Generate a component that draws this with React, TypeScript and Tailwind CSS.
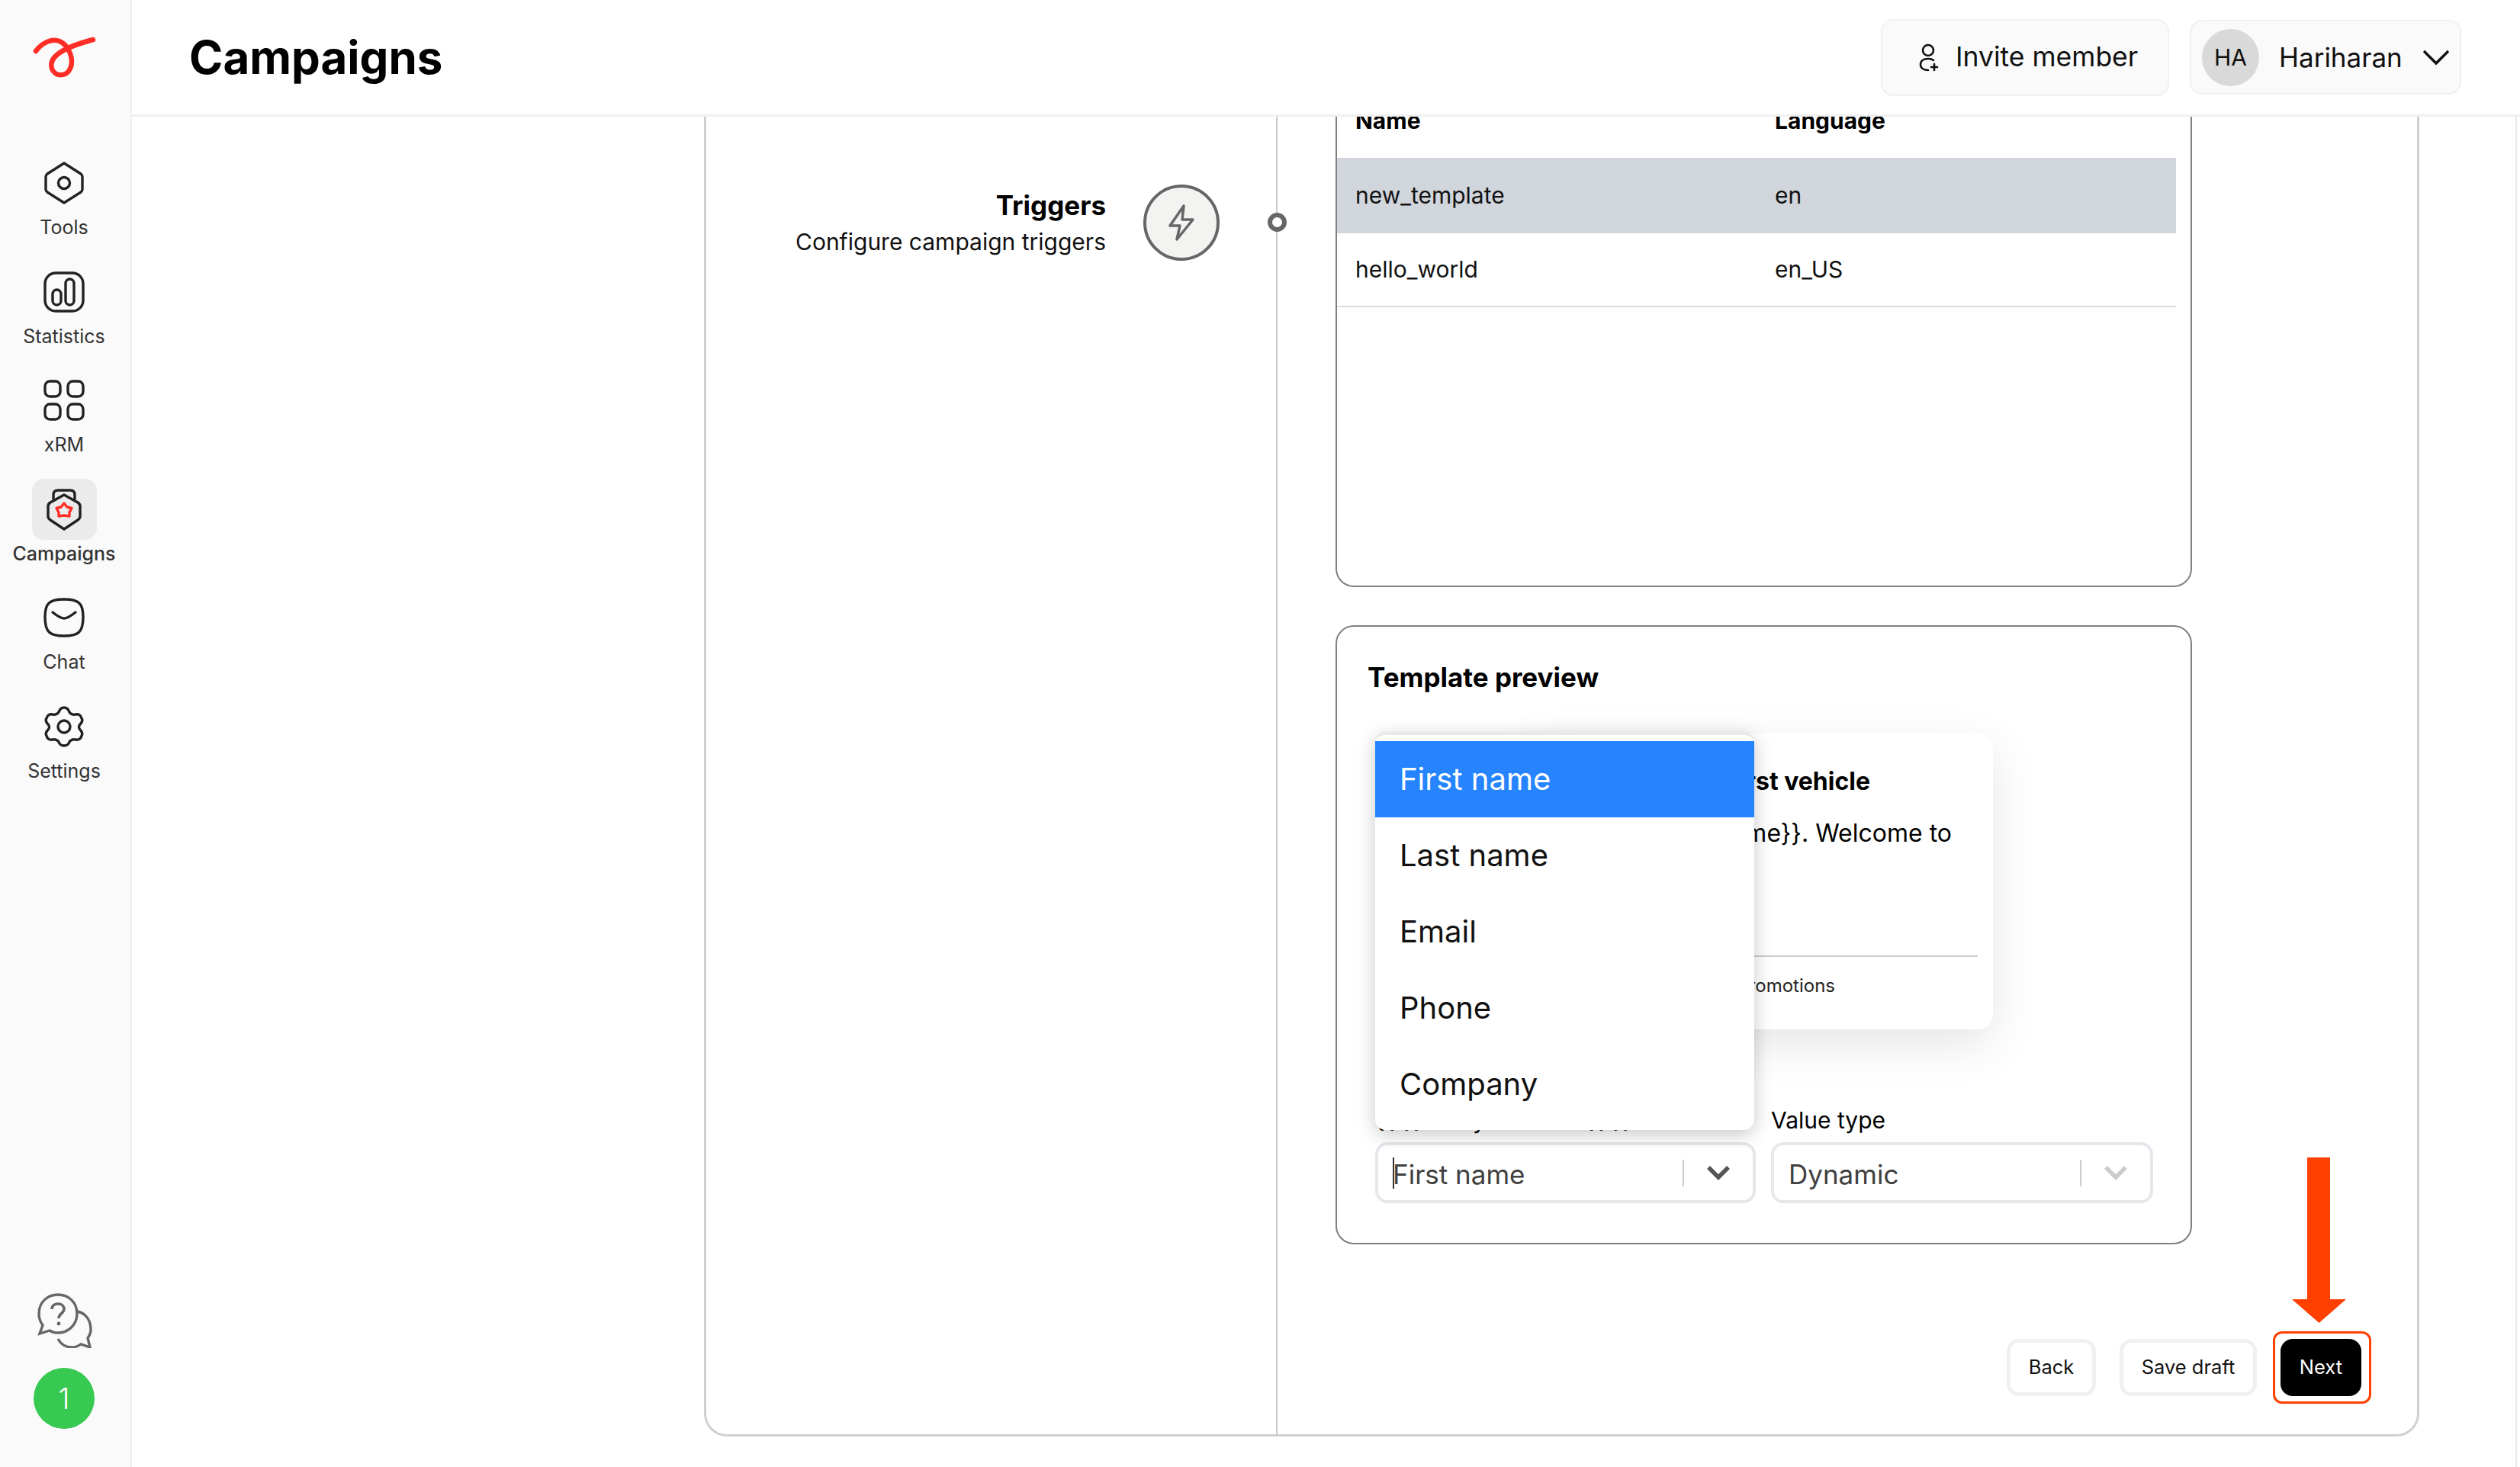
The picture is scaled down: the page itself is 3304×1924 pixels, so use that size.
import React from "react";

const Stroke = "#222222";

function Logo() {
  return (
    <svg width="172" height="152" viewBox="0 0 172 152" fill="none">
      <path d="M47 67 C55 56 68 50 78 54 C92 60 97 80 92 90 C87 101 72 101 68 90 C63 74 84 62 122 52" stroke="#ff2d26" strokeWidth="6.5" strokeLinecap="round" />
    </svg>
  );
}

function ToolsIcon() {
  return (
    <svg width="56" height="60" viewBox="0 0 56 60" fill="none" stroke={Stroke} strokeWidth="3.4" strokeLinejoin="round">
      <path d="M28 4 L50 18 Q52 19.500 52 22 L52 38 Q52 40.500 50 42 L28 56 L6 42 Q4 40.500 4 38 L4 22 Q4 19.500 6 18 Z" />
      <circle cx="28" cy="30" r="7.500" />
    </svg>
  );
}
function StatsIcon() {
  return (
    <svg width="56" height="56" viewBox="0 0 56 56" fill="none" stroke={Stroke} strokeWidth="3.4">
      <rect x="3" y="3" width="50" height="50" rx="14" />
      <rect x="13" y="25" width="11" height="20" rx="5.500" />
      <rect x="30" y="11" width="11" height="34" rx="5.500" />
    </svg>
  );
}
function GridIcon() {
  return (
    <svg width="56" height="56" viewBox="0 0 56 56" fill="none" stroke={Stroke} strokeWidth="3.4">
      <rect x="3" y="3" width="20" height="20" rx="6.500" />
      <rect x="33" y="3" width="20" height="20" rx="6.500" />
      <rect x="3" y="33" width="20" height="20" rx="6.500" />
      <rect x="33" y="33" width="20" height="20" rx="6.500" />
    </svg>
  );
}
function CampaignIcon() {
  return (
    <svg width="46" height="56" viewBox="0 0 46 56" fill="none" strokeLinejoin="round">
      <path d="M9 15 L9 9 Q9 3 15 3 L31 3 Q37 3 37 9 L37 15" stroke={Stroke} strokeWidth="3.4" />
      <path d="M23 9 L41 19 Q44 21 44 24 L44 37 Q44 40 41 42 L23 54 L5 42 Q2 40 2 37 L2 24 Q2 21 5 19 Z" stroke={Stroke} strokeWidth="3.4" />
      <path d="M23 20 L27 25 L33 26.500 L30 32 L30 37 L23 36 L16 37 L16 32 L13 26.500 L19 25 Z" stroke="#ff2d26" strokeWidth="3.400" />
    </svg>
  );
}
function ChatIcon() {
  return (
    <svg width="54" height="54" viewBox="0 0 54 54" fill="none" stroke={Stroke} strokeWidth="3.4" strokeLinecap="round">
      <path d="M27 3 C46 3 52 8 52 26 C52 46 46 51 27 51 C8 51 2 46 2 26 C2 8 8 3 27 3 Z" />
      <path d="M12 20 C17 24 22 28 27 28 C32 28 37 24 42 20" />
    </svg>
  );
}
function SettingsIcon() {
  return (
    <svg width="52" height="54" viewBox="0 0 52 54" fill="none" stroke={Stroke} strokeWidth="3.4" strokeLinejoin="round">
      <path d="M26 2 C30 2 32 5 33 8 C34 10 38 12 41 11 C45 10 48 12 49 16 C51 19 49 22 47 24 C45 26 45 29 47 31 C49 33 51 36 49 39 C48 43 45 45 41 44 C38 43 34 45 33 47 C32 50 30 52 26 52 C22 52 20 50 19 47 C18 45 14 43 11 44 C7 45 4 43 3 39 C1 36 3 33 5 31 C7 29 7 26 5 24 C3 22 1 19 3 16 C4 12 7 10 11 11 C14 12 18 10 19 8 C20 5 22 2 26 2 Z" />
      <circle cx="26" cy="27" r="8" />
    </svg>
  );
}
function HelpIcon() {
  return (
    <svg width="72" height="72" viewBox="0 0 72 72" fill="none" stroke="#666666" strokeWidth="3.4">
      <path d="M52 24 C58 25 70 30 70 48 C70 52 68 56 66 59 L69 71 L57 67 C53 70 49 71 45 71 C37 71 31 67 27 60" />
      <path d="M27 2 C41 2 52 12 52 27 C52 41 41 52 27 52 C23 52 19 51 16 49 L3 53 L7 42 C4 38 2 33 2 27 C2 12 13 2 27 2 Z" fill="#fafafa" />
      <path d="M19 21 C19 16 23 14 27 14 C32 14 35 17 35 21 C35 26 28 27 28 33" strokeWidth="3.600" />
      <circle cx="28" cy="40" r="2.400" fill="#666666" stroke="none" />
    </svg>
  );
}
function InviteIcon() {
  return (
    <svg width="28" height="37" viewBox="0 0 28 37" fill="none" stroke="#111111" strokeWidth="2.6" strokeLinecap="round">
      <circle cx="13" cy="9" r="7" />
      <path d="M20 22 C18 20.500 15 20 13 20 C7 20 3 23 3 27.500 C3 32 7 35 13 35" />
      <path d="M21 27 L21 35 M17 31 L25 31" />
    </svg>
  );
}
function Bolt() {
  return (
    <svg width="36" height="48" viewBox="0 0 36 48" fill="none" stroke="#666666" strokeWidth="3.5" strokeLinejoin="round">
      <path d="M21 2 L3 28 L16 28 L12 46 L33 20 L19 20 Z" />
    </svg>
  );
}
function ChevronSmall({ color }: { color: string }) {
  return (
    <svg width="30" height="20" viewBox="0 0 30 20" fill="none" stroke={color} strokeWidth="5.500">
      <path d="M2 3 L15 16 L28 3" />
    </svg>
  );
}

function NavItem({ label, active, icon }: { label: string; active?: boolean; icon: React.ReactNode }) {
  return (
    <div className="flex flex-col items-center">
      <div className={`flex h-[80px] w-[85px] items-center justify-center rounded-[16px] ${active ? "bg-[#ebebeb]" : ""}`}>{icon}</div>
      <div className={`h-[36px] text-[25px] leading-[36px] text-[#333333] ${active ? "font-medium" : ""}`}>{label}</div>
    </div>
  );
}

function Select({ value, muted }: { value: string; muted?: boolean }) {
  return (
    <div className="flex h-[80px] items-center rounded-[16px] border-[4px] border-[#e5e7eb] bg-white">
      <div className="flex-1 pl-[19px] pt-[4px] text-[35px] leading-none text-[#404040]">{value}</div>
      <div className="h-[35px] w-[2px] bg-[#cccccc]" />
      <div className="flex w-[90px] justify-center">
        <ChevronSmall color={muted ? "#cccccc" : "#555555"} />
      </div>
    </div>
  );
}

const options = ["First name", "Last name", "Email", "Phone", "Company"];

export default function App() {
  return (
    <div className="flex h-[1924px] w-[3304px] overflow-hidden bg-white font-['Inter',sans-serif] text-black">
      <aside className="flex w-[173px] shrink-0 flex-col border-r-[2px] border-[#f0f0f0] bg-[#fafafa]">
        <div className="h-[152px]">
          <Logo />
        </div>
        <nav className="mt-[48px] flex w-[168px] flex-col items-center gap-[26.5px]">
          <NavItem label="Tools" icon={<ToolsIcon />} />
          <NavItem label="Statistics" icon={<StatsIcon />} />
          <NavItem label="xRM" icon={<GridIcon />} />
          <NavItem label="Campaigns" active icon={<CampaignIcon />} />
          <NavItem label="Chat" icon={<ChatIcon />} />
          <NavItem label="Settings" icon={<SettingsIcon />} />
        </nav>
        <div className="mt-auto flex w-[168px] flex-col items-center pb-[50px]">
          <div className="mb-[26px] ml-[2px]">
            <HelpIcon />
          </div>
          <div className="flex h-[80px] w-[80px] items-center justify-center rounded-full bg-[#37c951] text-[38px] font-light text-white">1</div>
        </div>
      </aside>

      <div className="flex min-w-0 flex-1 flex-col">
        <header className="flex h-[153px] shrink-0 items-center border-b-[3px] border-[#f0f0f0] pl-[75px] pr-[77px]">
          <h1 className="text-[60px] font-bold leading-none">Campaigns</h1>
          <div className="ml-auto flex items-center gap-[27px]">
            <button className="flex h-[101px] w-[378px] items-center gap-[21px] rounded-[16px] border-[2px] border-[#f0f0f0] bg-[#fafafa] pl-[47px] text-[35.5px] text-[#111111]">
              <InviteIcon />
              <span>Invite member</span>
            </button>
            <button className="flex h-[98px] w-[356px] items-center rounded-[16px] border-[2px] border-[#f0f0f0] bg-[#fafafa] pl-[14px] text-[35px] text-[#111111]">
              <span className="flex h-[75px] w-[75px] items-center justify-center rounded-full bg-[#d9d9d9] text-[30px]">HA</span>
              <span className="ml-[26px]">Hariharan</span>
              <svg className="ml-[26px]" width="36" height="22" viewBox="0 0 36 22" fill="none" stroke="#111111" strokeWidth="3.4">
                <path d="M2 3 L18 19 L34 3" />
              </svg>
            </button>
          </div>
        </header>

        <main className="flex min-h-0 flex-1 pr-[4px]">
          <div className="flex flex-1 border-r-[2px] border-[#e8e8e8] pl-[750px] pr-[126px]">
            <section className="flex h-[1731px] w-full rounded-b-[30px] border-x-[3px] border-b-[3px] border-[#d0d0d0]">
              <div className="relative h-full w-[749px] shrink-0 border-r-[2px] border-[#c8c8c8] pt-[89px]">
                <div className="flex items-center justify-end pr-[74px]">
                  <div className="pt-[2px] text-right">
                    <div className="text-[35px] font-bold leading-[44px]">Triggers</div>
                    <div className="mt-[4px] text-[30px] leading-[44px] text-[#111111]">Configure campaign triggers</div>
                  </div>
                  <div className="ml-[49px] flex h-[100px] w-[100px] items-center justify-center rounded-full border-[4px] border-[#666666] bg-[#f3f4f2]">
                    <Bolt />
                  </div>
                </div>
                <div className="absolute right-[-14px] top-[126px] h-[25px] w-[25px] rounded-full border-[6px] border-[#666666] bg-white" />
              </div>

              <div className="flex min-w-0 flex-1 flex-col pl-[76px] pr-[295px]">
                <div className="h-[617px] shrink-0 overflow-hidden rounded-b-[24px] border-x-[2px] border-b-[2px] border-[#808080]">
                  <div className="-mt-[43px] grid h-[97px] grid-cols-[550px_1fr] items-center pl-[24px] text-[30px] font-bold">
                    <div>Name</div>
                    <div>Language</div>
                  </div>
                  <div className="grid h-[99px] w-[1100px] grid-cols-[550px_1fr] items-center bg-[#d1d5dc] pl-[24px] text-[30px] text-[#111111]">
                    <div>new_template</div>
                    <div>en</div>
                  </div>
                  <div className="grid h-[97px] w-[1100px] grid-cols-[550px_1fr] items-center border-b-[2px] border-[#dddddd] pl-[24px] text-[30px] text-[#111111]">
                    <div>hello_world</div>
                    <div>en_US</div>
                  </div>
                </div>

                <div className="mt-[50px] h-[812px] shrink-0 rounded-[24px] border-[2px] border-[#808080] px-[40px] pt-[40px]">
                  <div className="text-[35px] font-bold leading-[52px]">Template preview</div>
                  <div className="ml-[207px] mt-[47px] h-[389px] w-[613px] overflow-hidden rounded-[20px] bg-white p-[20px] shadow-[0_20px_60px_rgba(0,0,0,0.1)]">
                    <div className="mt-[24px] whitespace-nowrap pr-[141px] text-right text-[32px] font-bold leading-[40px]">Your first vehicle</div>
                    <div className="mt-[28px] whitespace-nowrap pr-[34px] text-right text-[32px] leading-[40px]">{"Hi {{first_name}}. Welcome to"}</div>
                    <div className="mt-[140px] border-t-[2px] border-[#cccccc]" />
                    <div className="mt-[22px] whitespace-nowrap pr-[187px] text-right text-[24px] leading-[32px] text-[#222222]">Stop promotions</div>
                  </div>
                  <div className="ml-[10px] mt-[101px] grid grid-cols-[499px_501px] gap-x-[20px]">
                    <div className="whitespace-nowrap text-[30px] leading-[36px]">{"{{1}} Body variable {{1}}"}</div>
                    <div className="text-[30px] leading-[36px]">Value type</div>
                    <div className="relative mt-[11px]">
                      <Select value="First name" />
                      <div className="absolute left-[23px] top-[20px] h-[41px] w-[2px] bg-[#333333]" />
                      <div className="absolute bottom-[96px] left-0 w-[497px] rounded-[14px] border-t-[4px] border-[#e8e8e8] bg-white pb-[10px] pt-[8px] shadow-[0_6px_24px_rgba(0,0,0,0.22)]">
                        {options.map((o, i) => (
                          <div key={o} className={`flex h-[100px] items-center pl-[32px] text-[40px] ${i === 0 ? "bg-[#2684ff] text-white" : "text-[#111111]"}`}>
                            {o}
                          </div>
                        ))}
                      </div>
                    </div>
                    <div className="mt-[11px]">
                      <Select value="Dynamic" muted />
                    </div>
                  </div>
                </div>

                <div className="relative ml-auto mr-[-222px] mt-[124px] flex items-center gap-[31px] text-[25.5px]">
                  <button className="flex h-[75px] w-[117px] items-center justify-center rounded-[16px] border-[5px] border-[#f0f0f0] bg-white text-[#111111]">Back</button>
                  <button className="flex h-[75px] w-[180px] items-center justify-center rounded-[16px] border-[5px] border-[#f0f0f0] bg-white text-[#111111]">Save draft</button>
                  <button className="relative flex h-[75px] w-[106px] items-center justify-center rounded-[16px] bg-black text-white">
                    Next
                    <span className="absolute inset-x-[-10px] inset-y-[-10px] -right-[13px] rounded-[12px] border-[3px] border-[#ff4000]" />
                    <svg className="absolute bottom-[96px] left-[15px]" width="71" height="217" viewBox="0 0 71 217" fill="#ff4000">
                      <path d="M20 0 L50 0 L50 186 L71 186 L35.500 217 L0 186 L20 186 Z" />
                    </svg>
                  </button>
                </div>
              </div>
            </section>
          </div>
        </main>
      </div>
    </div>
  );
}
